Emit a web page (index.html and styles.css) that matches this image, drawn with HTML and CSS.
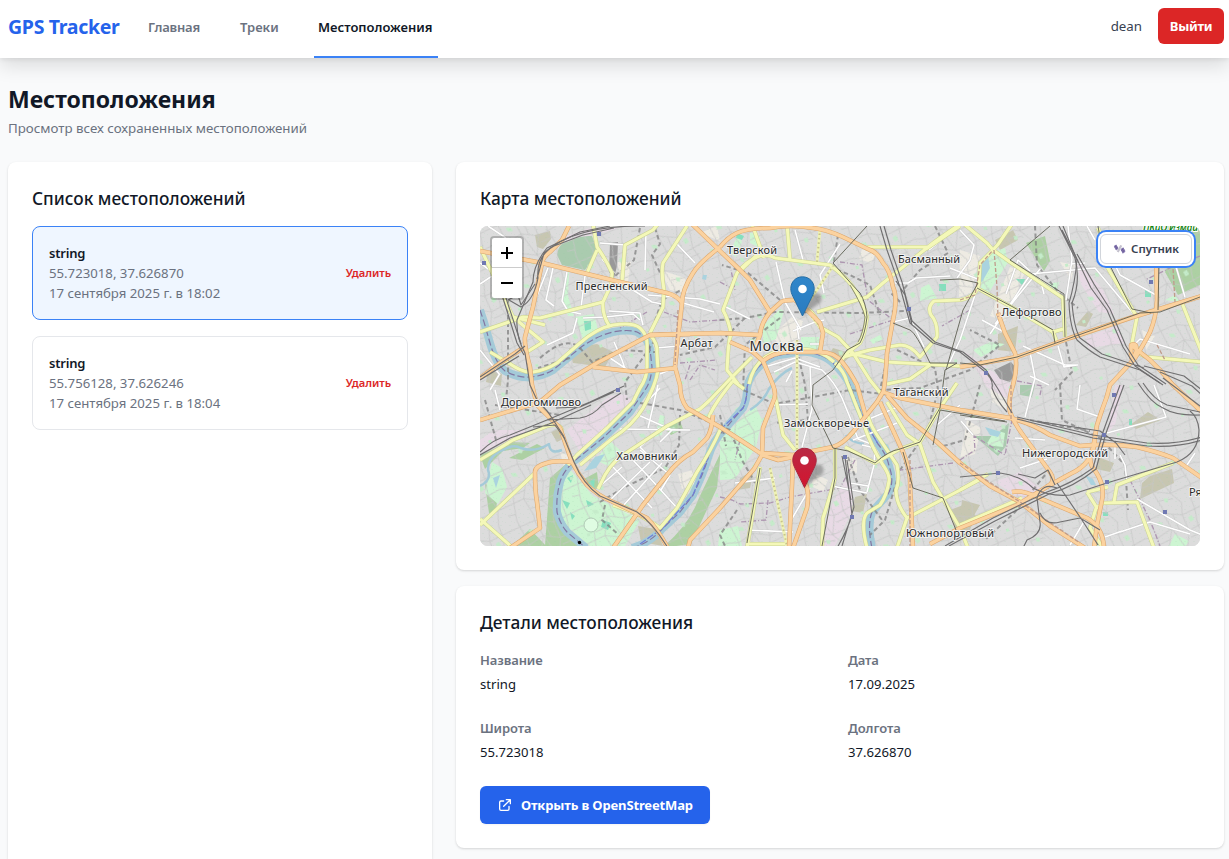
FILE: index.html
```html
<!DOCTYPE html>
<html lang="ru">
<head>
<meta charset="utf-8">
<title>GPS Tracker</title>
<link rel="stylesheet" href="styles.css">
</head>
<body>
<header class="topbar">
  <a class="brand">GPS Tracker</a>
  <nav class="nav">
    <a class="nav-link home">Главная</a>
    <a class="nav-link tracks">Треки</a>
    <a class="nav-link active">Местоположения</a>
  </nav>
  <div class="account"><span class="user">dean</span><button class="logout">Выйти</button></div>
</header>
<main class="page">
  <h1 class="page-title">Местоположения</h1>
  <p class="page-sub">Просмотр всех сохраненных местоположений</p>
  <div class="columns">
    <section class="card list-card">
      <h2 class="card-title">Список местоположений</h2>
      <div class="items">
        <article class="item selected">
          <div><h3 class="item-name">string</h3><p class="item-line">55.723018, 37.626870</p><p class="item-line">17 сентября 2025 г. в 18:02</p></div>
          <button class="remove">Удалить</button>
        </article>
        <article class="item">
          <div><h3 class="item-name">string</h3><p class="item-line">55.756128, 37.626246</p><p class="item-line">17 сентября 2025 г. в 18:04</p></div>
          <button class="remove">Удалить</button>
        </article>
      </div>
    </section>
    <div class="right">
      <section class="card">
        <h2 class="card-title">Карта местоположений</h2>
        <div class="map">
<svg class="map-svg" viewBox="480 226 720 320">
<defs>
  <pattern id="streets" width="67" height="59" patternUnits="userSpaceOnUse" patternTransform="rotate(-17)">
    <path class="street" d="M0 8L24 5L42 12L67 8M0 24L12 27L28 22L44 29L67 24M0 43L20 40L37 47L67 43M7 0L12 27L9 43L7 59M24 5L28 22L20 40L25 59M25 0L24 5M42 12L44 29L37 47L45 59M45 0L42 12M56 9L54 26L59 43L55 59M55 0L56 9M28 22L37 47M12 34L24 32M44 36L58 34M0 52L8 53M24 51L38 53M33 9L35 25"/>
    <path class="bit" d="M15 12l5 1 1 4-5-1zM47 16l4-1 1 5-4 1zM29 50l4 1-1 4-3-1zM3 33l3 0 0 3-3 0z"/>
  </pattern>
  <pattern id="grove" width="9" height="8" patternUnits="userSpaceOnUse"><path class="tree" d="M1 2h1v1H1zM5 5h2v1H5zM7 1h1v1H7z"/></pattern>
  <g id="river">
    <path d="M480 310L484 322L490 343Q496 364 505 371Q518 378 530 377Q543 376 553 370L580 348Q596 336 613 332Q628 329 637 332Q648 338 650 349L652 367Q651 382 645 390L630 412L603 438L573 462Q563 472 560 482Q556 497 557 512Q560 524 567 532L586 548"/>
    <path d="M632 548Q650 543 663 528L680 512L693 495Q704 472 708 458Q713 440 724 430L743 408Q747 400 747 388Q749 375 763 363Q773 355 787 354Q802 350 813 353Q826 356 833 363Q845 374 850 385L857 404L867 425L878 444Q887 455 889 466Q895 482 888 494L872 512Q867 525 872 548"/>
  </g>
  <g id="thin-river"><path d="M480 486Q492 480 488 470Q488 455 505 449Q514 444 521 448Q535 453 549 444Q550 455 562 450"/><path d="M792 368Q779 374 769 389Q764 401 750 410"/><path d="M846 435Q850 442 864 444"/></g>
  <g id="primary">
    <path d="M480 251L542 263L620 282L667 293Q678 296 682 303"/>
    <path d="M569 226L562 240L550 252Q543 257 542 263L533 307L525 337Q524 345 530 367L532 385L537 405L560 428L572 462Q578 474 587 485Q597 495 613 502L647 518Q656 527 668 548"/>
    <path d="M720 247Q699 263 693 273Q682 290 682 303L678 337L675 367L680 385Q680 399 687 408L720 427Q736 437 760 453L793 455L833 447Q843 444 853 432L877 402L883 392Q885 388 887 353L893 320Q898 298 893 287Q890 270 883 263Q877 252 870 250L843 237Q825 229 813 228Q790 224 770 228Q748 228 737 233Q728 237 720 247"/>
    <path d="M692 224L720 251L738 268L750 280L770 312"/>
    <path d="M730 342L753 352L763 361Q773 353 787 352L820 352Q835 352 843 363Q850 372 857 385L866 417"/>
    <path d="M793 300Q782 300 780 303L770 312Q761 323 760 335M793 299Q805 307 820 323L823 333L820 352"/>
    <path d="M480 420L540 402L560 385L597 363L650 335L720 333L760 335L754 350"/>
    <path d="M480 378L500 363L523 348M593 367L637 372L677 368M650 335L690 334"/>
    <path d="M572 462Q554 460 547 463Q535 466 535 472Q535 491 537 502L540 528L510 548"/>
    <path d="M713 415Q712 430 707 438L693 452Q678 460 667 475L643 505L613 548"/>
    <path d="M763 361L773 385Q777 395 773 402L763 428L762 455L754 469L720 508L690 540L688 548"/>
    <path d="M793 457L792 485L789 548M804 480Q810 490 807 508L793 548M793 457L778 460L762 455"/>
    <path d="M883 392L900 398L960 410L1010 418Q1031 423 1050 435L1080 446Q1110 443 1137 447Q1158 452 1173 458L1202 478"/>
    <path d="M880 402L903 452Q911 472 910 485L913 548"/>
    <path d="M887 395L907 418L937 442L960 463L990 486L1020 502L1050 526L1085 548"/>
    <path d="M998 313L1005 333L1015 353Q1018 368 1013 385Q1008 400 1010 412Q1014 423 1023 435L1050 472Q1057 482 1046 487"/>
    <path d="M960 367L1017 357L1070 338L1133 317L1202 296"/>
    <path d="M1156 260L1157 300Q1156 318 1150 332Q1144 344 1135 358L1110 385Q1107 398 1102 410L1097 425L1093 448Q1086 461 1096 472Q1105 486 1102 500L1097 525L1094 548"/>
    <path d="M1131 345Q1138 342 1136 352Q1131 364 1131 354L1131 345L1150 360L1160 370L1173 385L1202 412"/>
    <path d="M1095 440Q1093 464 1070 474L1050 485L1017 505L960 528L930 544"/>
    <path d="M1012 492Q1023 490 1037 497L1087 518Q1103 527 1104 548"/>
  </g>
  <g id="secondary">
    <path d="M480 332L523 317L540 318L603 302L611 285L612 273Q607 261 597 247L593 224M603 303Q602 315 610 327M597 250L587 273"/>
    <path d="M480 247Q491 270 505 300L513 317L543 342L527 352M513 317L545 325"/>
    <path d="M658 224L653 230L625 245L622 282M687 226L663 263Q661 273 664 290L663 307L650 333"/>
    <path d="M490 352L507 362Q524 374 533 372Q546 370 557 363L580 343Q597 328 613 325Q633 322 640 328Q648 335 647 347L647 367Q647 378 640 388L633 402L607 428L577 455L568 465"/>
    <path d="M650 335Q658 343 657 353L658 370Q656 385 643 408Q633 425 613 438L580 465"/>
    <path d="M738 384L727 370L728 353Q729 340 731 334Q729 321 723 310L737 273Q747 261 757 257Q767 253 775 258L830 265Q846 277 853 287Q865 306 867 317Q865 334 860 343L845 355L837 368M740 271L764 248M752 224L764 258M787 224L790 260"/>
    <path d="M817 312L867 297L883 283L933 243L960 224M867 247L930 247M926 249L960 226"/>
    <path d="M808 309Q816 315 820 327L838 337L853 353L870 380L882 395M843 357L870 350L900 345Q911 345 920 357L937 337Q938 323 931 315Q927 307 934 301L960 300Q977 297 979 283L980 263L993 250Q999 244 1003 237L1012 224M850 353L887 362L960 366"/>
    <path d="M749 384Q753 365 767 356Q782 347 798 349Q819 348 834 362M835 363Q844 371 847 382L856 405L864 425Q872 448 883 465Q890 475 889 481Q887 495 880 505L867 513Q860 521 867 548"/>
    <path d="M867 412Q869 423 877 435L897 465Q900 481 896 490Q896 504 907 518L897 548M907 518L983 478"/>
    <path d="M752 357L730 379L710 400L700 409L667 426L623 455Q609 464 600 485L598 489M732 380L744 389M732 382Q711 408 708 420"/>
    <path d="M721 428Q711 451 697 472L677 508L660 528Q641 514 613 505"/>
    <path d="M480 460L513 440L547 426Q565 422 561 435M535 473L480 525M480 519L513 548"/>
    <path d="M775 395L783 435L795 450M845 447L875 463L900 449L920 442L940 408L957 383"/>
    <path d="M887 402L907 435L920 444L933 482L960 528L968 548M887 384L910 379L930 365"/>
    <path d="M835 448L835 478Q829 500 823 518L822 548M760 467L753 512L747 548M747 544L785 544"/>
    <path d="M964 224L987 243L993 250L1010 262L1063 298L1065 337M977 288L1015 309L1053 332L1063 329M1053 332L1057 342"/>
    <path d="M1103 260L1137 317L1132 343Q1136 354 1147 357L1202 362M1182 303L1202 353M1098 228L1104 242"/>
    <path d="M1087 492L1097 508L1103 503L1137 502L1154 548M1087 492L1108 487M1114 502L1117 485L1173 463M1097 505L1090 528L1103 548M960 490L988 474M1022 498L960 525"/>
  </g>
  <g id="white-roads">
    <path d="M488 226L506 238M480 263L495 274L480 284M548 268L533 306M553 268L546 300L554 306M567 272L562 301L568 311L581 314M585 276L581 308M600 243L625 245M602 259L614 273M625 285L652 302L662 304M609 311L640 313L643 325M583 318L605 317L633 314L640 320M614 342L622 360L625 369M547 345L573 333L577 318M646 232L645 270M677 244L695 263M648 295L700 299L720 304M683 303L714 312M610 358L631 372M480 350L500 375M655 348L680 346M660 374L677 367M499 375L490 390M495 390L500 410M658 385L648 428M660 388L643 406M636 414L672 430L660 442M620 429L690 430M613 467L652 508M630 457L648 476L677 508M600 486L622 467M610 500L650 462M622 507L662 463M640 450L670 475L661 490M660 428L640 447L650 457"/>
    <path d="M795 230L803 260M776 262L785 302L801 330M724 306L750 319M793 331L815 322L824 320M799 339L797 326M840 244L820 275L824 293M895 283L908 283L916 278L950 276M929 250L939 242M893 322L910 318L924 347M960 230L974 245L970 260L957 278M950 268L980 280L960 340L946 370M810 344L820 344M768 366L795 358L820 367M774 372L795 362L822 370Q834 381 842 398L851 420L858 439L874 445M810 367L812 409L802 447M786 382L792 371M853 440L897 423M857 424L900 406M862 445L875 448L874 465L867 492M937 425L960 405M810 488L790 522M748 530L793 532M773 405L808 404M832 486L867 493M850 483L868 486M735 483L775 478"/>
    <path d="M990 334L1030 275L1052 291M995 324L1040 269M1030 271L1018 260L1006 294M1030 274L1095 268L1137 318M1097 228L1120 275L1156 295M1071 264L1085 263M1068 226L1072 260L1066 300M1004 332L982 320M1023 346L1065 365L1078 365M1040 278L1044 294M1058 346L1064 367L1077 365M1030 352L1035 378L1025 417M1080 385L1077 409L1100 417M1107 433L1166 417L1154 385M1030 376L1049 385M961 421L973 435M1015 438L1045 440M1047 459L1020 468M965 419L1008 419M1120 455L1125 465L1127 482M1137 499L1190 530L1202 535M1105 537L1122 531M1120 532L1150 522L1190 534M1070 545L1085 520M1115 443L1115 459M1185 468L1195 453M1087 226L1095 240M1174 260L1185 297M1133 346L1140 339L1190 354"/>
  </g>
  <g id="rail">
    <path d="M610 226L580 232L547 248Q533 265 533 282L517 320Q516 337 525 353L530 385L537 400L548 412L563 435L574 462Q583 484 600 496L637 512Q652 522 668 548"/>
    <path d="M614 228L583 235L554 246Q536 256 538 278Q534 300 521 307L509 300M645 226Q575 225 544 253L537 279"/>
    <path d="M502 295L517 343L524 355M505 295L521 344M508 300L518 295L521 305L535 284M480 377L515 354L525 346M480 380L519 356"/>
    <path d="M480 452Q493 439 510 435L547 420L590 402L624 386M480 455L510 438L549 424L591 405M547 420L580 418Q593 416 602 405L621 393M533 427L555 425L565 439M556 408L580 407L614 392"/>
    <path d="M880 226L887 250L900 287L910 323L933 343L960 352L983 370Q994 379 992 388Q996 400 1007 412M884 226L891 250L902 282L912 321L935 342L963 352L986 370L998 389L1012 413M896 281L905 295L912 325"/>
    <path d="M1063 226L1077 260Q1075 283 1069 303Q1070 328 1077 340Q1089 351 1100 357L1140 370L1160 383"/>
    <path d="M1059 226L1075 258Q1081 282 1072 303Q1074 328 1080 338L1102 354L1144 368M1062 230L1074 253L1091 288L1107 310L1123 347L1135 366L1163 385M1077 254L1094 284L1110 309L1126 346L1138 365L1166 384"/>
    <path d="M1138 383Q1151 403 1163 408Q1176 416 1200 415M1143 383Q1154 400 1167 405L1200 412M1163 378L1200 406M1160 372L1192 386L1202 395M1144 366L1184 376L1202 390"/>
    <path d="M1120 385L1103 432L1093 468Q1071 484 1047 492L993 518L945 546M1124 385L1106 433L1096 469Q1074 487 1049 494L995 521L949 546"/>
    <path d="M1017 417L1093 435L1147 443Q1174 445 1202 437M1017 419L1093 438L1147 446Q1177 448 1202 440M1035 421L1100 431L1116 443L1125 455"/>
    <path d="M960 477L1000 473Q1019 475 1033 488Q1050 497 1070 495L1110 482L1177 462Q1199 453 1199 430Q1198 417 1190 411M1018 474L1035 478L1048 470L1055 485"/>
    <path d="M1023 548L1027 540Q1042 534 1040 522L1037 498Q1042 482 1057 488M1040 513Q1046 526 1060 522L1080 518L1100 530M1057 483L1082 520L1098 545"/>
    <path d="M845 457L852 515Q848 529 837 548M847 460L854 507L842 546M842 456L851 500"/>
  </g>
  <g id="tram">
    <path d="M867 226L833 263Q854 287 860 293Q866 303 867 317Q865 334 860 343L847 350L833 370L813 385L812 405L833 448L848 451L875 463Q888 451 900 449L920 442L940 408L945 370L957 363L940 363L930 363Q916 333 910 330L893 323"/>
    <path d="M960 363L980 365L1017 357L1140 313L1160 312L1200 297M940 280L960 279L978 283L963 310L946 370M1050 226L1010 260L1064 294L1065 337M903 452L913 488L943 498L958 535M933 445L940 410L1005 421M977 288L1013 307L1053 330M1053 331L1055 343M960 415L1007 422M1098 226L1102 250L1132 309L1151 313M1159 262L1158 310M835 448L835 478L822 546M760 468L747 543"/>
  </g>
  <linearGradient id="pin-blue" x2="0" y2="1"><stop offset="0" stop-color="#2f86ca"/><stop offset="1" stop-color="#2a7cc0"/></linearGradient>
  <linearGradient id="pin-red" x2="0" y2="1"><stop offset="0" stop-color="#b92b45"/><stop offset="1" stop-color="#d3142e"/></linearGradient>
  <filter id="soft"><feGaussianBlur stdDeviation="1.8"/></filter>
</defs>
<path class="land" d="M480 226h720v320H480z"/>
<g class="brown">
<path d="M535 235l15-4 1 8-8 10-6-2zM569 348l28 -4 16 8-8 15-32-4zM488 370l14 4-1 12-15-4zM998 334l20-8-3 26-17-2zM855 497l12-3-4 19-12-2zM950 510l16-6 10 12-8 18-12-2zM1130 425l18-13 13 8-25 9zM1150 476l22-7 2 14-34 16 2-16zM962 500l18 5-8 14-12 0zM638 526l18 3 7 17-22-4zM1076 325l12-14 5 3-7 13zM560 428l5 10-8 4-6-10zM1098 457l16 6-4 9-14-3zM995 240l18-10 5 10-18 10zM740 478l14-8-4 18-13 2zM833 348l20 6-13 12-14-7z"/></g>
<g class="cream"><path d="M660 270l25 8 3 16-18-4zM618 262l13 0-3 20-10-3zM700 233l17-7 3 15zM960 250l20 6-9 37-12 4zM1010 267l15 5-20 49-15-5zM772 335l20-18 11 4-7 26-16 0zM610 508l31 8-10 16-22-12zM678 474l15-4 4 14-15 5zM815 474l13 6-5 12-12-6zM990 388l17 5-1 17-14-8zM1060 262l15 3-4 15zM1142 330l13 6-9 14zM862 249l14 5-5 9-12-4zM967 420l14 8-6 26-15 5zM560 452l11 5-7 10zM845 456l12 3 0 14-10-3z"/></g>
<g class="pink"><path d="M560 238l30-10 30 0-20 5-30 8zM610 396l14-2 10 8-32 30-23 18-12-20zM480 440l14-10 30 0 3 3-47 20zM845 481l7 2 0 28-17 35h-13q7-44 23-65zM1076 258l28 33 10 23-15-2-18-28zM1085 337l32-11 7 17-35 5zM995 482l25-10 25 20-20 10zM965 352l22 15 23 17-3 15-20-12zM1120 230l12 5-8 9-10-6zM1115 385l8 0-8 40-7 7z"/></g>
<g class="grey-block"><path d="M610 243l8-1-1 24-3 12-5-6zM994 370l17-8 7 8-8 12-10-3z"/></g>
<g class="pitch"><path d="M557 255Q559 242 568 242Q579 235 592 236L597 250Q591 262 585 270L562 265zM1020 385h15l-3 12-12-2zM974 436l20 0 15-13-3 23-8 10z"/></g>
<g class="wood"><path d="M1026 243l19-7 5 25-6 10zM1173 253L1200 250V285L1178 295L1165 272zM1165 226h35v34h-22zM550 478l16-14 3 4q-20 42 12 78h-36zM720 460l-3 28-26 56-29 4q27-23 36-48l22-46zM509 458l28-14 8 4-23 12zM480 455l30-13 20 1-7 5-20 3-18 18zM582 480l15-8 2 17-7 0zM485 484l13 6-2 22-7 1zM665 429l15-8 3 8-12 6zM510 548l20-19 18 19z"/></g>
<g class="park"><path d="M720 440L755 405L762 420L756 447L735 479L720 480zM763 326l17-17 4 2-8 28-13 5zM801 337h18v12h-18zM568 467q-22 37 2 62l20 17h35l15-26-47-24zM575 317l19 -3 4 16-15 9zM492 462l10 6 5 19-9 17-13-11zM567 272l2 0-1 24 6 20-6 0-6-20zM610 441l12 11-14 14-12-6zM983 256l22-8 3 14-20 32-7-3zM730 253l8-19 4 8-6 15zM1048 284l11-2-2 9zM750 232l10 5-2 10-8-4zM921 288l8-4 8 14-17 3zM973 350l17-8 15 2-24 13zM660 415l5 1-3 19-7 2zM720 530l18-4 4 20-24 0zM1165 300l10-5 5 7zM870 340l10-5 3 4-10 5zM995 430l10 3-2 14-17-2zM1175 534l14 7-5 7-15-2z"/></g>
<g class="mint"><path d="M588 483l7-5-1 10zM567 478l6-3-2 8zM1016 279l9 0-2 7zM939 284h7v7h-7zM1145 290h6v7h-6zM562 500l8 3-3 6zM603 520l8 3-3 7-7-3zM570 512l5 4-3 4zM586 500l8 4-6 3zM584 321l7 0 0 8-6 2zM1103 512h5v4h-5zM1129 419h3v6h-3zM737 233l7 3-2 4-6-2zM1140 445h12v1h-12z"/></g>
<path class="street-fill" d="M480 226h720v320H480z"/>
<path class="grove-fill" d="M480 226h720v320H480z"/>
<g class="water-area"><path d="M595 457l10-3-9 14-12 3zM982 260l6-4 2 12-8 14-4-2zM985 427l16 5-3 5-8-2zM1085 475l8 4 3 6-5 0zM880 440l8 5 4 9-5-2zM493 478l7-3-4 13zM703 275l4 0-1 5-4-1z"/></g>
<use href="#thin-river" class="brook"/>
<use href="#river" class="river"/>
<use href="#river" class="river-line"/>
<path class="blue-line" d="M720 430L743 408Q747 400 747 388Q749 375 763 363Q773 355 787 354Q802 350 813 353Q826 356 833 363Q845 374 850 385L857 404L867 425L878 444M640 544L663 528L693 495L708 458"/>
<g class="metro"><path d="M655 228L660 244L652 255L661 275M650 335L657 315L662 300L681 290M720 320L745 318L775 312L860 313L905 311M745 318L715 347L680 355M540 358Q566 335 580 348L592 362L620 350L655 352M495 405L560 415M485 400L496 440M508 300L508 380L506 400M780 300L748 273L722 265M780 318L745 345L743 390L775 404L850 390L890 395M640 403L680 410L730 430L742 460L755 483M797 350L805 385L808 420L775 423M897 350L935 368L938 390L928 430L900 470L885 520L870 535M600 502L625 487L665 468L679 445L680 415M605 505L602 520L618 534M838 235L833 268L850 275L870 285L880 315M1035 226L1037 265L1058 292L1078 308M1060 385L1062 420L1100 438L1125 465L1128 510M1030 420L1090 431M890 345L880 390L920 388L970 370L1000 345L970 330M737 510L720 535L725 546M1045 475L1015 512L985 540M980 385L965 440L940 447M640 228L634 260L615 276M720 415L726 446M848 457L860 490L882 520M655 340L640 362L625 382L627 400M570 358L538 368M1066 342L1072 372L1055 390M900 302L890 292M935 226L948 253L920 270L903 290"/></g>
<g class="admin"><path d="M647 312L620 328M664 312L690 322L720 320M680 363L717 360M690 365L685 380M720 497L732 500L740 504L770 503L790 497L840 488L855 460M768 500L766 520L740 522M953 463L900 470M720 282L735 290L731 270M850 334L893 320L868 300L862 265L840 262M970 310L942 326M960 460L975 450L974 436L1005 455L1012 420M1130 480L1150 520L1160 546M690 380L700 365L715 370M1200 256L1170 268L1145 280M740 440L735 460M1017 381L1042 386L1040 395"/></g>
<use href="#white-roads" class="road-edge"/><use href="#white-roads" class="road"/>
<use href="#secondary" class="sec-edge"/><use href="#secondary" class="sec"/>
<g class="sec-dash-base"><path d="M820 229L817 262M810 300L833 266M797 340V450M770 468L787 546M806 309L820 327"/></g>
<g class="sec-dash"><path d="M820 229L817 262M810 300L833 266M797 340V450M770 468L787 546M806 309L820 327"/></g>
<use href="#primary" class="pri-edge"/><use href="#primary" class="pri"/>
<g class="tunnel"><path d="M994 250L997 287L998 317M910 460V546M678 310L675 365M960 300L975 295L980 265L993 250M960 463L1020 502L1080 543M1158 260L1173 268L1175 302M1011 385V420M1157 345L1165 360"/></g>
<use href="#rail" class="rail"/>
<use href="#tram" class="tram"/>
<path class="twin-road" d="M850 285Q862 305 865 317Q863 334 858 342"/>
<circle class="circus" cx="591" cy="525" r="7"/>
<g class="station"><path d="M597 232h4v4h-4zM482 261h4v4h-4zM616 388h4v4h-4zM907 307h4v4h-4zM984 371h4v4h-4zM1149 280h4v4h-4zM1112 393h4v4h-4zM1102 433h4v4h-4zM996 471h4v4h-4zM1105 480h4v4h-4zM1163 510h4v4h-4zM843 455h4v4h-4zM850 515h4v4h-4z"/></g>
<circle cx="579.500" cy="542.500" r="1.700"/>
<g class="label">
<text x="575.500" y="290" textLength="72">Пресненский</text>
<text x="727" y="254" textLength="50">Тверской</text>
<text x="898" y="263" textLength="62">Басманный</text>
<text x="1001.500" y="316" textLength="60">Лефортово</text>
<text x="680.500" y="347" textLength="32">Арбат</text>
<text x="501" y="406" textLength="80">Дорогомилово</text>
<text x="893.500" y="396" textLength="55">Таганский</text>
<text x="784" y="427" textLength="85">Замоскворечье</text>
<text x="616.500" y="460" textLength="61">Хамовники</text>
<text x="1022" y="457" textLength="86">Нижегородский</text>
<text x="906" y="537" textLength="88">Южнопортовый</text>
<text x="1189" y="496">Ря</text>
<text class="city" x="749.500" y="351" textLength="54">Москва</text>
</g>
<text class="park-label" x="1143" y="230.500" textLength="55">ПКиО Измай</text>
<g transform="translate(790 276)"><path class="pin-shadow" d="M12 40L20 18Q34 14 31 26Z"/><path fill="url(#pin-blue)" stroke="#276fa5" d="M12.500 .8C5.700.8.8 6 .8 12.600c0 3 .8 5.300 2.200 8L12.500 40 22 20.600c1.400-2.700 2.200-5 2.200-8C24.200 6 19.300.8 12.500.8z"/><circle cx="12.500" cy="13" r="4.300" fill="#fff"/></g>
<g transform="translate(792 447.500)"><path class="pin-shadow" d="M12 40L20 18Q34 14 31 26Z"/><path fill="url(#pin-red)" stroke="#a8273d" d="M12.500 .8C5.700.8.8 6 .8 12.600c0 3 .8 5.300 2.200 8L12.500 40 22 20.600c1.400-2.700 2.200-5 2.200-8C24.200 6 19.300.8 12.500.8z"/><circle cx="12.500" cy="13" r="4.300" fill="#fff"/></g>
</svg>
          <div class="zoom"><button class="zoom-btn"><svg width="12" height="12" viewBox="0 0 12 12"><path d="M0 6h12M6 0v12"/></svg></button><button class="zoom-btn"><svg width="12" height="12" viewBox="0 0 12 12"><path d="M0 6h12"/></svg></button></div>
          <button class="sat"><svg class="sat-icon" width="13" height="12" viewBox="0 0 13 12"><path fill="#8678b3" d="M.8 3.200l2.400-1.700 2.300 3.700-2.400 2.300zM7.500 6.500l2.700-2.300 2.300 4-2.700 2.500z"/><path fill="#c3c0cd" d="M3.800 8.500L7.200 2l2 .8-3.500 6.700z"/><path stroke="#65558f" stroke-width=".6" d="M2 2.300l2.300 4.100M8.800 5.300l2.400 4.200M1.500 4.600l2.400-1.800M2.400 6l2.400-1.900M8.200 7.800l2.600-2.300M9 9.200l2.600-2.300" fill="none"/></svg><span>Спутник</span></button>
        </div>
      </section>
      <section class="card">
        <h2 class="card-title">Детали местоположения</h2>
        <dl class="details">
          <div class="field"><dt>Название</dt><dd>string</dd></div>
          <div class="field"><dt>Дата</dt><dd>17.09.2025</dd></div>
          <div class="field"><dt>Широта</dt><dd>55.723018</dd></div>
          <div class="field"><dt>Долгота</dt><dd>37.626870</dd></div>
        </dl>
        <a class="osm"><svg width="16" height="16" viewBox="0 0 24 24"><path d="M10 6H6a2 2 0 00-2 2v10a2 2 0 002 2h10a2 2 0 002-2v-4M14 4h6m0 0v6m0-6L10 14"/></svg><span>Открыть в OpenStreetMap</span></a>
      </section>
    </div>
  </div>
</main>
</body>
</html>
```
FILE: styles.css
```css
* { box-sizing: border-box; margin: 0; padding: 0; }
body { height: 859px; overflow: hidden; background: #f9fafb; color: #111827; font: 13.3px/20px "Noto Sans", "Open Sans", sans-serif; }
button { font: inherit; border: 0; background: none; }
.topbar { display: flex; align-items: stretch; height: 58px; padding: 0 5px 0 8px; background: #fff; box-shadow: 0 8px 18px rgba(0,0,0,.12), 0 2px 4px rgba(0,0,0,.06); }
.brand { width: 112px; line-height: 54px; font-size: 19.5px; font-weight: 700; color: #2563eb; letter-spacing: -.3px; white-space: nowrap; }
.nav { display: flex; gap: 32px; margin-left: 24px; }
.nav-link { padding: 0 4px; line-height: 55px; font-size: 13px; font-weight: 600; color: #6b7280; white-space: nowrap; }
.nav-link.home { width: 60px; letter-spacing: -.2px; }
.nav-link.tracks { width: 46px; }
.nav-link.active { width: 124px; color: #111827; border-bottom: 2px solid #3b82f6; }
.account { display: flex; align-items: flex-start; gap: 16px; margin-left: auto; padding-top: 8px; }
.user { line-height: 36px; color: #374151; }
.logout { width: 66px; height: 36px; border-radius: 6px; background: #dc2626; color: #fff; font-weight: 700; font-size: 13px; letter-spacing: -.3px; }
.page { padding: 26px 5px 0 8px; }
.page-title { font-size: 23px; line-height: 31px; height: 32px; font-weight: 700; white-space: nowrap; }
.page-sub { margin-top: 2px; color: #6b7280; }
.columns { display: grid; grid-template-columns: 424px 768px; align-items: start; gap: 24px; margin-top: 24px; }
.right { display: flex; flex-direction: column; gap: 16px; }
.card { padding: 24px; border-radius: 8px; background: #fff; box-shadow: 0 1px 3px rgba(0,0,0,.1), 0 1px 2px rgba(0,0,0,.06); }
.list-card { height: 697px; border-radius: 8px 8px 0 0; }
.card-title { height: 24px; margin-bottom: 16px; line-height: 25px; font-size: 17.300px; font-weight: 500; white-space: nowrap; }
.items { display: flex; flex-direction: column; gap: 16px; }
.item { display: flex; align-items: center; justify-content: space-between; padding: 16px; border: 1px solid #e5e7eb; border-radius: 8px; }
.item.selected { background: #eff6ff; border-color: #3b82f6; }
.item-name { font-size: 13px; font-weight: 600; letter-spacing: -.2px; }
.item-line { color: #6b7280; font-size: 13.200px; }
.remove { color: #dc2626; font-size: 11.200px; font-weight: 600; letter-spacing: -.05px; }
.map { position: relative; height: 320px; border-radius: 8px; overflow: hidden; background: #ddd; }
.map-svg { display: block; width: 720px; height: 320px; }
.map-svg use, .map-svg g { stroke-linejoin: round; }
.land { fill: #dcdcdc; }
.street { fill: none; stroke: #c6c5c5; stroke-width: .7; }
.bit { fill: #c5ebca; }
.tree { fill: #8fcaa0; opacity: .4; }
.street-fill { fill: url(#streets); }
.grove-fill { fill: url(#grove); opacity: .3; }
.brown { fill: #c7c6b1; }
.cream { fill: #eeebe3; }
.pink { fill: #e8dae5; }
.grey-block { fill: #999; }
.pitch { fill: #aacbaf; }
.wood { fill: #add0a3; }
.park { fill: #cdf5d2; }
.mint { fill: #86dfbe; }
.water-area { fill: #aad3df; }
.river { fill: none; stroke: #a4cad8; stroke-width: 8; }
.river-line { fill: none; stroke: #8377a2; stroke-width: 1.200; stroke-dasharray: 7 3; }
.blue-line { fill: none; stroke: #6f7fd8; stroke-width: 1.200; stroke-dasharray: 7 2; }
.brook { fill: none; stroke: #a4cad8; stroke-width: 2.500; }
.metro { fill: none; stroke: #808080; stroke-width: 2; stroke-dasharray: 4.500 3; opacity: .75; }
.admin { fill: none; stroke: #ad96b0; stroke-width: 1.300; stroke-dasharray: 5 2 1 2; }
.road-edge { fill: none; stroke: #c5c5c5; stroke-width: 2.300; }
.road { fill: none; stroke: #fff; stroke-width: 1.600; }
.sec-edge { fill: none; stroke: #c9d193; stroke-width: 4.100; }
.sec { fill: none; stroke: #f4f8b8; stroke-width: 3.100; }
.sec-dash-base { fill: none; stroke: #eff3b5; stroke-width: 3; }
.sec-dash { fill: none; stroke: #c6c28c; stroke-width: 2; stroke-dasharray: 1.500 3; }
.pri-edge { fill: none; stroke: #dda66c; stroke-width: 4.500; }
.pri { fill: none; stroke: #fbd29f; stroke-width: 3.400; }
.tunnel { fill: none; stroke: #bf9b8b; stroke-width: 1.300; stroke-dasharray: 4 2; }
.rail { fill: none; stroke: #706f70; stroke-width: 1.150; }
.tram { fill: none; stroke: #5f6054; stroke-width: .9; }
.twin-road { fill: none; stroke: #77795d; stroke-width: .8; }
.circus { fill: #dffce2; stroke: #b0cab5; }
.station { fill: #7079b2; }
.label { font-size: 11px; fill: #2b2b2b; stroke: #f2f2f2; stroke-width: 2px; paint-order: stroke; }
.label .city { font-size: 14px; }
.park-label { font-size: 10px; font-style: italic; font-weight: 600; fill: #168516; stroke: #fff; stroke-width: 2px; paint-order: stroke; }
.pin-shadow { fill: #333; opacity: .35; filter: url(#soft); }
.zoom { position: absolute; left: 10px; top: 10px; width: 34px; height: 64px; border: 2px solid rgba(0,0,0,.2); border-radius: 4px; background: #fff; background-clip: padding-box; }
.zoom-btn { display: flex; align-items: center; justify-content: center; width: 30px; height: 30px; }
.zoom-btn:first-child { border-bottom: 1px solid #ccc; }
.zoom-btn path { stroke: #000; stroke-width: 2; }
.sat { position: absolute; top: 8px; right: 8px; display: flex; align-items: center; justify-content: center; gap: 5px; width: 92px; height: 30px; border: 1px solid #d1d5db; border-radius: 6px; background: #fff; color: #374151; font-size: 11.500px; font-weight: 600; letter-spacing: -.05px; white-space: nowrap; box-shadow: 0 0 0 2px #fff, 0 0 0 4px #3b82f6; }
.details { display: grid; grid-template-columns: 352px 352px; gap: 24px 16px; }
.field { display: flex; flex-direction: column; gap: 4px; height: 44px; }
dt { color: #6b7280; font-size: 13px; font-weight: 600; letter-spacing: -.1px; }
dd { font-size: 13.100px; }
.osm { display: inline-flex; align-items: center; gap: 8px; width: 230px; height: 38px; margin-top: 24px; padding-left: 17px; border-radius: 6px; background: #2563eb; color: #fff; font-size: 13px; font-weight: 700; letter-spacing: -.15px; white-space: nowrap; box-shadow: 0 1px 2px rgba(0,0,0,.05); }
.osm path { fill: none; stroke: #fff; stroke-width: 2; stroke-linecap: round; stroke-linejoin: round; }
```
